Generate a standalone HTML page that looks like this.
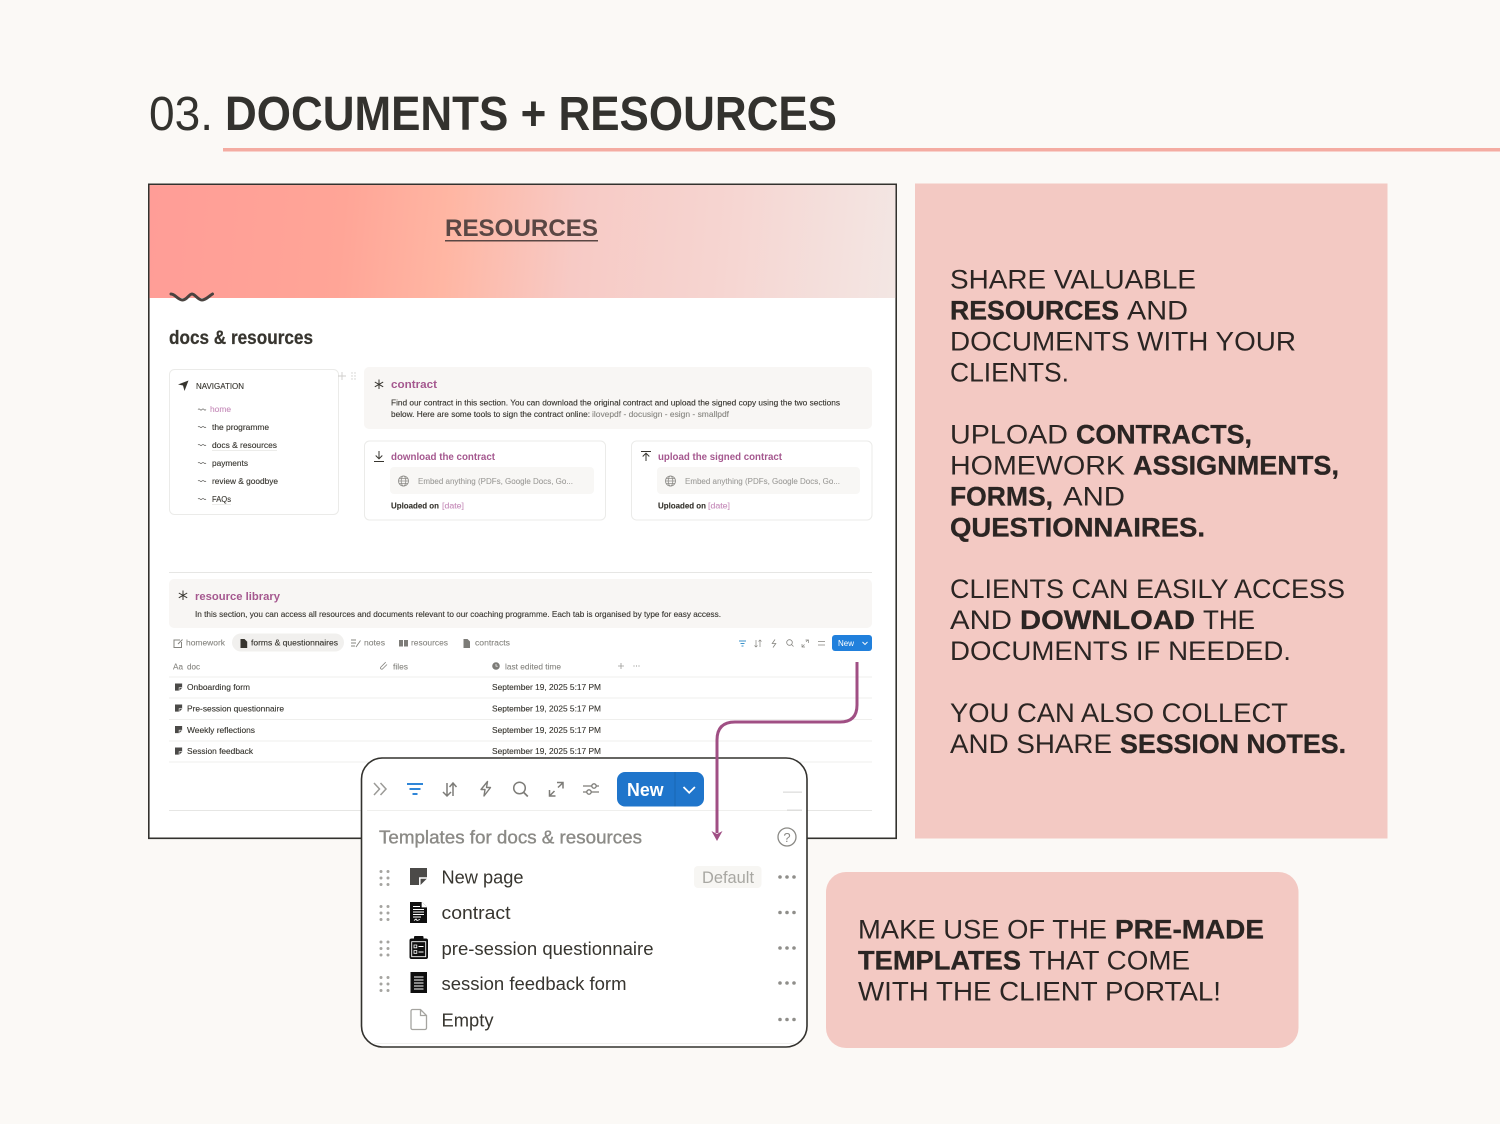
<!DOCTYPE html>
<html lang="en"><head><meta charset="utf-8"><title>03. Documents + Resources</title>
<style>
html,body{margin:0;padding:0;background:#fbf9f6;width:1500px;height:1124px;overflow:hidden}
svg{display:block}
text{font-family:"Liberation Sans",sans-serif;white-space:pre}
.p{font-size:26.5px;fill:#2b2523}
.pb{font-size:26.5px;fill:#2b2523;font-weight:bold;stroke:#2b2523;stroke-width:.3}
.s{font-size:8px;fill:#37352f;stroke:#37352f;stroke-width:.12}
.g{font-size:8px;fill:#85847f;stroke:#85847f;stroke-width:.08}
.pu{font-size:11px;font-weight:bold;fill:#a5588f}
.l{font-size:18px;fill:#37352f}
</style></head><body>
<svg width="1500" height="1124" viewBox="0 0 1500 1124" xmlns="http://www.w3.org/2000/svg">
<defs>
<linearGradient id="b" gradientUnits="userSpaceOnUse" x1="149" y1="205" x2="895" y2="275">
<stop offset="0" stop-color="#ff9d97"/><stop offset=".26" stop-color="#ffa597"/><stop offset=".40" stop-color="#ffb6a3"/><stop offset=".57" stop-color="#f7cac5"/><stop offset=".77" stop-color="#f6d5d1"/><stop offset="1" stop-color="#f3e6e3"/>
</linearGradient>
<g id="doc"><path d="M0 0h17v10.5l-6.5 6.5H0z" fill="#4b4a48"/><path d="M17 10H9.800v7" fill="none" stroke="#fff" stroke-width="1.500"/></g>
<g id="dr" fill="#a5a4a0"><circle cx="1.500" cy="1.500" r="1.500"/><circle cx="8.500" cy="1.500" r="1.500"/><circle cx="1.500" cy="8" r="1.500"/><circle cx="8.500" cy="8" r="1.500"/><circle cx="1.500" cy="14.500" r="1.500"/><circle cx="8.500" cy="14.500" r="1.500"/></g>
<g id="mo" fill="#8f8e8a"><circle cx="2" cy="0" r="1.800"/><circle cx="9" cy="0" r="1.800"/><circle cx="16" cy="0" r="1.800"/></g>
<path id="sq" d="M0 0q1-1.300 2 0t2 0 2 0 2 0" fill="none" stroke="#6a6966" stroke-width=".7"/>
<g id="gl" fill="none" stroke="#8d8c88" stroke-width=".8"><circle r="5"/><ellipse rx="2.300" ry="5"/><path d="M-5 0H5M-4.300-2.500H4.300M-4.300 2.500H4.300"/></g>
</defs>
<rect width="1500" height="1124" fill="#fbf9f6"/>
<!-- heading -->
<text x="149" y="130" font-size="48" fill="#33322e" textLength="64" lengthAdjust="spacingAndGlyphs">03.</text>
<text x="225" y="130" font-size="48" font-weight="bold" fill="#33322e" textLength="612" lengthAdjust="spacingAndGlyphs">DOCUMENTS + RESOURCES</text>
<rect x="223" y="148" width="1277" height="3.500" fill="#f4aca2"/>
<!-- frame -->
<rect x="148.800" y="184.300" width="747.400" height="654" fill="#fff" stroke="#33322e" stroke-width="1.600"/>
<rect x="149.600" y="185.100" width="745.800" height="112.900" fill="url(#b)"/>
<text x="445" y="236" font-size="24" font-weight="bold" fill="#5a4744" textLength="153" lengthAdjust="spacingAndGlyphs">RESOURCES</text>
<rect x="445" y="240" width="153" height="1.500" fill="#5a4744"/>
<path d="M171 294c4 0 7 6 11.500 6s6.500-6 9.500-6 6 6 10 6 7-4 10.500-6" fill="none" stroke="#4a4340" stroke-width="3" stroke-linecap="round"/>
<text x="169" y="344" font-size="19" font-weight="bold" fill="#37352f" stroke="#37352f" stroke-width=".25" textLength="144" lengthAdjust="spacingAndGlyphs">docs &amp; resources</text>
<!-- nav -->
<rect x="169.500" y="369.500" width="169" height="145" rx="5" fill="#fff" stroke="#ebebe9"/>
<path d="M188.500 380.500L178 384.500l5 1 1.500 5.500z" fill="#37352f"/>
<text x="196" y="389" class="s" textLength="48" lengthAdjust="spacingAndGlyphs">NAVIGATION</text>
<use href="#sq" x="198" y="409.500"/><text x="210" y="412" class="s" style="fill:#c78ebb;stroke:#c78ebb" textLength="21" lengthAdjust="spacingAndGlyphs">home</text>
<use href="#sq" x="198" y="427"/><text x="212" y="430" class="s" textLength="57" lengthAdjust="spacingAndGlyphs">the programme</text>
<use href="#sq" x="198" y="445"/><text x="212" y="448" class="s" textLength="65" lengthAdjust="spacingAndGlyphs">docs &amp; resources</text>
<use href="#sq" x="198" y="463"/><text x="212" y="466" class="s" textLength="36" lengthAdjust="spacingAndGlyphs">payments</text>
<use href="#sq" x="198" y="481"/><text x="212" y="484" class="s" textLength="66" lengthAdjust="spacingAndGlyphs">review &amp; goodbye</text>
<use href="#sq" x="198" y="499"/><text x="212" y="502" class="s" textLength="19" lengthAdjust="spacingAndGlyphs">FAQs</text>
<rect x="212" y="450" width="65" height=".7" fill="#e4e4e2"/><rect x="212" y="504" width="19" height=".7" fill="#e4e4e2"/>
<path d="M342 372v8M338 376h8" stroke="#cfcecb" stroke-width=".9"/>
<g fill="#cfcecb"><circle cx="352" cy="373" r=".7"/><circle cx="355" cy="373" r=".7"/><circle cx="352" cy="376" r=".7"/><circle cx="355" cy="376" r=".7"/><circle cx="352" cy="379" r=".7"/><circle cx="355" cy="379" r=".7"/></g>
<!-- contract callout -->
<rect x="364" y="367" width="508" height="62" rx="5" fill="#f8f6f4"/>
<path d="M379 379.500v9.500M374.800 382l8.400 4.800M374.800 386.800l8.400-4.800" stroke="#37352f" stroke-width="1"/>
<text x="391" y="388" class="pu" textLength="46" lengthAdjust="spacingAndGlyphs">contract</text>
<text x="391" y="405.500" class="s" textLength="449" lengthAdjust="spacingAndGlyphs">Find our contract in this section. You can download the original contract and upload the signed copy using the two sections</text>
<text x="391" y="417" class="s" textLength="199" lengthAdjust="spacingAndGlyphs">below. Here are some tools to sign the contract online:</text>
<text x="592" y="417" class="g" textLength="137" lengthAdjust="spacingAndGlyphs">ilovepdf - docusign - esign - smallpdf</text>
<!-- cards -->
<rect x="364.500" y="441" width="241" height="79" rx="5" fill="#fff" stroke="#ebebe9"/>
<path d="M379 451v7.500M375.700 455.500l3.300 3.300 3.300-3.300M374 461.500h10" fill="none" stroke="#37352f" stroke-width="1"/>
<text x="391" y="460" class="pu" style="font-size:10px" textLength="104" lengthAdjust="spacingAndGlyphs">download the contract</text>
<rect x="390" y="467" width="204" height="27" rx="4" fill="#f8f7f5"/>
<use href="#gl" x="403.500" y="481"/>
<text x="418" y="484" class="g" style="fill:#9b9a97;stroke:#9b9a97" textLength="155" lengthAdjust="spacingAndGlyphs">Embed anything (PDFs, Google Docs, Go...</text>
<text x="391" y="508.500" class="s" font-weight="bold" textLength="48" lengthAdjust="spacingAndGlyphs">Uploaded on</text>
<text x="442" y="508.500" class="s" style="fill:#c78ebb;stroke:#c78ebb" textLength="22" lengthAdjust="spacingAndGlyphs">[date]</text>
<rect x="631.500" y="441" width="240.500" height="79" rx="5" fill="#fff" stroke="#ebebe9"/>
<path d="M641 451.500h10M646 461v-7.500M642.700 456.500l3.300-3.300 3.300 3.300" fill="none" stroke="#37352f" stroke-width="1"/>
<text x="658" y="460" class="pu" style="font-size:10px" textLength="124" lengthAdjust="spacingAndGlyphs">upload the signed contract</text>
<rect x="657" y="467" width="203" height="27" rx="4" fill="#f8f7f5"/>
<use href="#gl" x="670.500" y="481"/>
<text x="685" y="484" class="g" style="fill:#9b9a97;stroke:#9b9a97" textLength="155" lengthAdjust="spacingAndGlyphs">Embed anything (PDFs, Google Docs, Go...</text>
<text x="658" y="508.500" class="s" font-weight="bold" textLength="48" lengthAdjust="spacingAndGlyphs">Uploaded on</text>
<text x="708" y="508.500" class="s" style="fill:#c78ebb;stroke:#c78ebb" textLength="22" lengthAdjust="spacingAndGlyphs">[date]</text>
<!-- library -->
<rect x="169" y="572" width="703" height="1" fill="#e6e6e4"/>
<rect x="169" y="579" width="703" height="49" rx="5" fill="#f8f6f4"/>
<path d="M183 590.500v9.500M178.800 593l8.400 4.800M178.800 597.800l8.400-4.800" stroke="#37352f" stroke-width="1"/>
<text x="195" y="600" class="pu" textLength="85" lengthAdjust="spacingAndGlyphs">resource library</text>
<text x="195" y="617" class="s" textLength="526" lengthAdjust="spacingAndGlyphs">In this section, you can access all resources and documents relevant to our coaching programme. Each tab is organised by type for easy access.</text>
<!-- tabs -->
<path d="M180 640h-6v7.500h7.500V642M178 644l4.500-4.500" fill="none" stroke="#85847f" stroke-width="1"/>
<text x="186" y="645.500" class="g" textLength="39" lengthAdjust="spacingAndGlyphs">homework</text>
<rect x="232" y="633.500" width="112" height="18" rx="9" fill="#f1f0ee"/>
<path d="M240.500 639h4l2.700 2.700V648h-6.700z" fill="#37352f"/>
<text x="251" y="645.500" class="s" textLength="87" lengthAdjust="spacingAndGlyphs">forms &amp; questionnaires</text>
<path d="M351 640h5M351 643h5M351 646h4M356 647l4.500-6.500" fill="none" stroke="#85847f" stroke-width=".9"/>
<text x="364" y="645.500" class="g" textLength="21" lengthAdjust="spacingAndGlyphs">notes</text>
<path d="M399 640h4v6.500h-4zM404 640h4v6.500h-4z" fill="#7d7c78"/>
<text x="411" y="645.500" class="g" textLength="37" lengthAdjust="spacingAndGlyphs">resources</text>
<path d="M463.500 639h4l2.500 2.500v6.500h-6.500z" fill="#7d7c78"/>
<text x="475" y="645.500" class="g" textLength="35" lengthAdjust="spacingAndGlyphs">contracts</text>
<!-- small toolbar -->
<path d="M739 641h7M740.500 643.500h4M741.500 646h2" fill="none" stroke="#3b92c9" stroke-width="1.100"/>
<path d="M756 640v7M754.500 645.500l1.500 1.500 1.500-1.500M760 647v-7M758.500 641.500l1.500-1.500 1.500 1.500" fill="none" stroke="#85847f" stroke-width=".7"/>
<path d="M775 639.500l-2.800 4h3.600l-2.800 4" fill="none" stroke="#85847f" stroke-width=".8"/>
<circle cx="789.500" cy="642.500" r="2.800" fill="none" stroke="#85847f" stroke-width=".8"/><path d="M791.500 644.500l2 2" stroke="#85847f" stroke-width=".8"/>
<path d="M802.500 646.500l2-2M806 641.700l2-1.700M805.500 640h3v3M802 644v3h3" fill="none" stroke="#85847f" stroke-width=".7"/>
<path d="M818 641.500h7M818 645h7" stroke="#85847f" stroke-width=".8"/>
<rect x="832" y="635" width="40" height="16" rx="3" fill="#2180dc"/>
<text x="838" y="646" font-size="8" fill="#fff" textLength="16" lengthAdjust="spacingAndGlyphs">New</text>
<path d="M862.500 642l2.500 2.500 2.500-2.500" fill="none" stroke="#fff" stroke-width=".9"/>
<!-- table -->
<text x="173" y="669.500" class="g" textLength="10" lengthAdjust="spacingAndGlyphs">Aa</text>
<text x="187" y="669.500" class="g" textLength="13" lengthAdjust="spacingAndGlyphs">doc</text>
<path d="M387 664l-4.500 4.500a1.300 1.300 0 0 1-1.800-1.800l5-5" fill="none" stroke="#85847f" stroke-width=".8" transform="translate(0 .5)"/>
<text x="393" y="669.500" class="g" textLength="15" lengthAdjust="spacingAndGlyphs">files</text>
<circle cx="496" cy="666" r="3.800" fill="#7d7c78"/><path d="M496 664v2.200h1.800" fill="none" stroke="#fff" stroke-width=".7"/>
<text x="505" y="669.500" class="g" textLength="56" lengthAdjust="spacingAndGlyphs">last edited time</text>
<path d="M621 663v6M618 666h6" stroke="#9b9a97" stroke-width=".8"/>
<g fill="#9b9a97"><circle cx="634" cy="666" r=".6"/><circle cx="636.500" cy="666" r=".6"/><circle cx="639" cy="666" r=".6"/></g>
<g fill="#efefed"><rect x="169" y="676.500" width="703" height="1"/><rect x="169" y="697.500" width="703" height="1"/><rect x="169" y="719" width="703" height="1"/><rect x="169" y="740.500" width="703" height="1"/><rect x="169" y="761.500" width="703" height="1"/></g>
<use href="#doc" transform="translate(175 683.500) scale(.42)"/><text x="187" y="690" class="s" textLength="63" lengthAdjust="spacingAndGlyphs">Onboarding form</text><text x="492" y="690" class="s" textLength="109" lengthAdjust="spacingAndGlyphs">September 19, 2025 5:17 PM</text>
<use href="#doc" transform="translate(175 704.500) scale(.42)"/><text x="187" y="711.500" class="s" textLength="97" lengthAdjust="spacingAndGlyphs">Pre-session questionnaire</text><text x="492" y="711.500" class="s" textLength="109" lengthAdjust="spacingAndGlyphs">September 19, 2025 5:17 PM</text>
<use href="#doc" transform="translate(175 726) scale(.42)"/><text x="187" y="733" class="s" textLength="68" lengthAdjust="spacingAndGlyphs">Weekly reflections</text><text x="492" y="733" class="s" textLength="109" lengthAdjust="spacingAndGlyphs">September 19, 2025 5:17 PM</text>
<use href="#doc" transform="translate(175 747.500) scale(.42)"/><text x="187" y="754" class="s" textLength="66" lengthAdjust="spacingAndGlyphs">Session feedback</text><text x="492" y="754" class="s" textLength="109" lengthAdjust="spacingAndGlyphs">September 19, 2025 5:17 PM</text>
<rect x="169" y="810" width="703" height="1" fill="#e6e6e4"/>
<!-- popup -->
<rect x="361.500" y="758" width="445.500" height="289" rx="21" fill="#fff" stroke="#33322e" stroke-width="1.600"/>
<rect x="367" y="810" width="434" height="1" fill="#efefed"/>
<rect x="783" y="791.500" width="19" height="1.300" fill="#dededc"/><rect x="787" y="809.500" width="15" height="1.500" fill="#dededc"/>
<rect x="374" y="1043" width="420" height="1" fill="#f1f1ef"/>
<path d="M374 783l5.500 6-5.500 6M380.500 783l5.500 6-5.500 6" fill="none" stroke="#9b9a97" stroke-width="1.500"/>
<path d="M407 784h16M409.500 789h11M412.500 794h5" fill="none" stroke="#2f86d8" stroke-width="2"/>
<path d="M447 783v13M443 792l4 4 4-4M453 796v-13M449.500 787l3.500-4 3.500 4" fill="none" stroke="#7d7c78" stroke-width="1.500"/>
<path d="M487.500 781.500l-6.500 8h4l-1 6.500 6.500-8.500h-4z" fill="none" stroke="#7d7c78" stroke-width="1.400" stroke-linejoin="round"/>
<circle cx="519.500" cy="788" r="5.800" fill="none" stroke="#7d7c78" stroke-width="1.500"/><path d="M523.800 792.500l4 4" stroke="#7d7c78" stroke-width="1.700"/>
<path d="M550 795.500l4.500-4.500M558 787.500l5-4.800M557 782.500h6v6M549.500 790v6h6" fill="none" stroke="#7d7c78" stroke-width="1.500"/>
<path d="M583 786h16M583 792h16" stroke="#7d7c78" stroke-width="1.300"/><circle cx="594" cy="786" r="2.200" fill="#fff" stroke="#7d7c78" stroke-width="1.300"/><circle cx="589" cy="792" r="2.200" fill="#fff" stroke="#7d7c78" stroke-width="1.300"/>
<rect x="617" y="772" width="87" height="34.500" rx="8" fill="#1f75cb"/>
<rect x="674.500" y="772" width="1" height="34.500" fill="#1a66b3"/>
<text x="627" y="796" font-size="18" font-weight="bold" fill="#fff" textLength="36.500" lengthAdjust="spacingAndGlyphs">New</text>
<path d="M683.500 787l5.700 5.700 5.700-5.700" fill="none" stroke="#fff" stroke-width="1.800"/>
<text x="379" y="843.500" font-size="18" fill="#8b8a86" textLength="263" lengthAdjust="spacingAndGlyphs" style="stroke:#8b8a86;stroke-width:.35">Templates for docs &amp; resources</text>
<circle cx="787" cy="837" r="9" fill="none" stroke="#8b8a86" stroke-width="1.300"/>
<text x="787" y="842" font-size="13" fill="#8b8a86" text-anchor="middle">?</text>
<!-- rows -->
<use href="#dr" x="379.500" y="870"/><use href="#dr" x="379.500" y="905"/><use href="#dr" x="379.500" y="940.500"/><use href="#dr" x="379.500" y="976"/>
<use href="#doc" x="410" y="868"/>
<text x="441.500" y="883.500" class="l" textLength="82" lengthAdjust="spacingAndGlyphs">New page</text>
<rect x="694" y="866" width="67.500" height="22" rx="4" fill="#f7f6f3"/>
<text x="702" y="883" font-size="16.500" fill="#a8a7a2" textLength="52" lengthAdjust="spacingAndGlyphs">Default</text>
<use href="#mo" x="778" y="877"/>
<path d="M410 902h12l5 5v16h-17z" fill="#0f0f0f"/><path d="M422 902v5h5" fill="#fff" stroke="#fff" stroke-width=".7"/><path d="M413 906.500h7M413 909.500h11M413 912h11M413 914.500h11M413 917h8M414 920.500l2-1.500 1 1.500 3-1" fill="none" stroke="#fff" stroke-width=".9"/>
<text x="441.500" y="919" class="l" textLength="69" lengthAdjust="spacingAndGlyphs">contract</text>
<use href="#mo" x="778" y="912.500"/>
<rect x="409.500" y="938.500" width="18.500" height="20.500" rx="2" fill="#0f0f0f"/><rect x="414" y="936" width="9.500" height="4.500" rx="1" fill="#0f0f0f"/><rect x="411.700" y="941.700" width="14" height="15" fill="none" stroke="#fff" stroke-width=".9"/><path d="M414 945h2.800v2.800H414zM414 950.500h2.800v2.800H414z" fill="none" stroke="#fff" stroke-width=".8"/><path d="M418.500 946.500h5M418.500 952h5" stroke="#fff" stroke-width="1"/>
<text x="441.500" y="955" class="l" textLength="212" lengthAdjust="spacingAndGlyphs">pre-session questionnaire</text>
<use href="#mo" x="778" y="948"/>
<rect x="410.500" y="972" width="16.500" height="21" fill="#0f0f0f"/><path d="M414 977h9.500M414 980h9.500M414 983h9.500M414 986h9.500M414 989h9.500" stroke="#fff" stroke-width="1"/>
<text x="441.500" y="990" class="l" textLength="185" lengthAdjust="spacingAndGlyphs">session feedback form</text>
<use href="#mo" x="778" y="983"/>
<path d="M411 1011a1.500 1.500 0 0 1 1.500-1.500H420.500l6 6V1028a1.500 1.500 0 0 1-1.500 1.500H412.500a1.500 1.500 0 0 1-1.500-1.500zM420.500 1009.500V1015.500h6" fill="none" stroke="#a5a4a0" stroke-width="1.300"/>
<text x="441.500" y="1026.500" class="l" textLength="52" lengthAdjust="spacingAndGlyphs">Empty</text>
<use href="#mo" x="778" y="1019.500"/>
<!-- arrow -->
<path d="M857 662V705Q857 722 840 722H735Q717 722 717 740V833" fill="none" stroke="#a04f84" stroke-width="3"/>
<path d="M711.500 831l5.500 3 5.500-3-5.500 10z" fill="#a04f84"/>
<!-- right panel -->
<rect x="915" y="183.500" width="472.500" height="655" fill="#f3c9c3"/>
<text x="950" y="288.500" class="p" textLength="246" lengthAdjust="spacingAndGlyphs">SHARE VALUABLE</text>
<text x="950" y="319.500" class="pb" textLength="169" lengthAdjust="spacingAndGlyphs">RESOURCES</text><text x="1127" y="319.500" class="p" textLength="61" lengthAdjust="spacingAndGlyphs">AND</text>
<text x="950" y="350.500" class="p" textLength="346" lengthAdjust="spacingAndGlyphs">DOCUMENTS WITH YOUR</text>
<text x="950" y="381.500" class="p" textLength="119" lengthAdjust="spacingAndGlyphs">CLIENTS.</text>
<text x="950" y="443.500" class="p" textLength="118" lengthAdjust="spacingAndGlyphs">UPLOAD</text><text x="1076" y="443.500" class="pb" textLength="176" lengthAdjust="spacingAndGlyphs">CONTRACTS,</text>
<text x="950" y="474.500" class="p" textLength="175" lengthAdjust="spacingAndGlyphs">HOMEWORK</text><text x="1133" y="474.500" class="pb" textLength="206" lengthAdjust="spacingAndGlyphs">ASSIGNMENTS,</text>
<text x="950" y="505.500" class="pb" textLength="103" lengthAdjust="spacingAndGlyphs">FORMS,</text><text x="1063" y="505.500" class="p" textLength="62" lengthAdjust="spacingAndGlyphs">AND</text>
<text x="950" y="536.500" class="pb" textLength="255" lengthAdjust="spacingAndGlyphs">QUESTIONNAIRES.</text>
<text x="950" y="598" class="p" textLength="395" lengthAdjust="spacingAndGlyphs">CLIENTS CAN EASILY ACCESS</text>
<text x="950" y="629" class="p" textLength="62" lengthAdjust="spacingAndGlyphs">AND</text><text x="1020" y="629" class="pb" textLength="175" lengthAdjust="spacingAndGlyphs">DOWNLOAD</text><text x="1203" y="629" class="p" textLength="52" lengthAdjust="spacingAndGlyphs">THE</text>
<text x="950" y="660" class="p" textLength="341" lengthAdjust="spacingAndGlyphs">DOCUMENTS IF NEEDED.</text>
<text x="950" y="722" class="p" textLength="338" lengthAdjust="spacingAndGlyphs">YOU CAN ALSO COLLECT</text>
<text x="950" y="753" class="p" textLength="162" lengthAdjust="spacingAndGlyphs">AND SHARE</text><text x="1120" y="753" class="pb" textLength="226" lengthAdjust="spacingAndGlyphs">SESSION NOTES.</text>
<!-- bottom box -->
<rect x="826" y="872" width="472.500" height="176" rx="20" fill="#f3c9c3"/>
<text x="858" y="938.500" class="p" textLength="249" lengthAdjust="spacingAndGlyphs">MAKE USE OF THE</text><text x="1115" y="938.500" class="pb" textLength="149" lengthAdjust="spacingAndGlyphs">PRE-MADE</text>
<text x="858" y="969.500" class="pb" textLength="163" lengthAdjust="spacingAndGlyphs">TEMPLATES</text><text x="1029" y="969.500" class="p" textLength="161" lengthAdjust="spacingAndGlyphs">THAT COME</text>
<text x="858" y="1000.500" class="p" textLength="363" lengthAdjust="spacingAndGlyphs">WITH THE CLIENT PORTAL!</text>
</svg>
</body></html>
